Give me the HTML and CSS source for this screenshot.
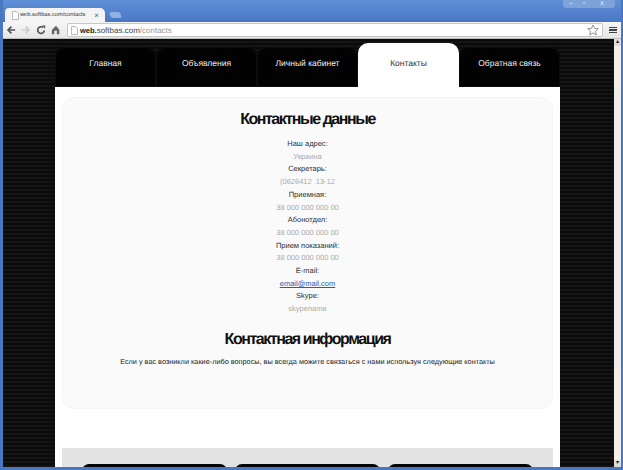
FILE: index.html
```html
<!DOCTYPE html>
<html lang="ru">
<head>
<meta charset="utf-8">
<title>Контакты</title>
<link rel="stylesheet" href="styles.css">
</head>
<body>
<div class="window">
  <div class="tabstrip">
    <div class="tab">
      <svg class="doc" width="7" height="9" viewBox="0 0 8 10"><path d="M.5.5h4.500l2.500 2.500v6.500h-7z" fill="#fff" stroke="#aaa"/></svg>
      <span class="tab-title">web.softbas.com/contacts</span>
      <span class="tab-close">×</span>
    </div>
    <div class="newtab"></div>
    <div class="winctl">
      <span class="winbtn">–</span><span class="winbtn">▫</span><span class="winbtn winx">x</span>
    </div>
  </div>
  <div class="toolbar">
    <svg class="tool" width="10" height="10" viewBox="0 0 12 12"><path d="M11 6H3M6.500 2 2.500 6l4 4" fill="none" stroke="#555" stroke-width="2"/></svg>
    <svg class="tool" width="10" height="10" viewBox="0 0 12 12"><path d="M1 6h8M5.500 2l4 4-4 4" fill="none" stroke="#ccc" stroke-width="2"/></svg>
    <svg class="tool" width="10" height="10" viewBox="0 0 12 12"><path d="M10 6.500A4 4 0 1 1 8.500 3" fill="none" stroke="#555" stroke-width="2"/><path d="M7 0.500h4v4z" fill="#555"/></svg>
    <svg class="tool" width="10" height="10" viewBox="0 0 12 12"><path d="M6 1 1 6v5h3V7h3v4h3V6z" fill="#666"/></svg>
    <div class="omnibox">
      <svg class="doc" width="7" height="9" viewBox="0 0 8 10"><path d="M.5.5h4.500l2.500 2.500v6.500h-7z" fill="#fff" stroke="#aaa"/></svg>
      <span class="url"><b class="url-host">web.</b><span class="url-dom">softbas.com</span><span class="url-path">/contacts</span></span>
      <svg class="star" width="12" height="12" viewBox="0 0 13 13"><path d="m6.500 1 1.700 3.700 4 .4-3 2.700.9 4-3.600-2.100-3.600 2.100.9-4-3-2.700 4-.4z" fill="#fff" stroke="#888"/></svg>
    </div>
    <div class="menu"><i></i><i></i><i></i></div>
  </div>
  <div class="viewport">
    <div class="page">
      <nav class="nav">
        <a class="nav-item">Главная</a>
        <a class="nav-item">Объявления</a>
        <a class="nav-item">Личный кабинет</a>
        <a class="nav-item active">Контакты</a>
        <a class="nav-item">Обратная связь</a>
      </nav>
      <main class="content">
        <section class="card">
          <h1 class="title">Контактные данные</h1>
          <dl class="fields">
            <dt>Наш адрес:</dt><dd>Украина</dd>
            <dt>Секретарь:</dt><dd>(0626412&nbsp; 13-12</dd>
            <dt>Приемная:</dt><dd>38 000 000 000 00</dd>
            <dt>Абонотдел:</dt><dd>38 000 000 000 00</dd>
            <dt>Прием показаний:</dt><dd>38 000 000 000 00</dd>
            <dt>E-mail:</dt><dd><a class="mail" href="#">email@mail.com</a></dd>
            <dt>Skype:</dt><dd>skypename</dd>
          </dl>
          <h2 class="title title-second">Контактная информация</h2>
          <p class="note">Если у вас возникли какие-либо вопросы, вы всегда можите связаться с нами используя следующие контакты</p>
        </section>
        <section class="band">
          <div class="band-btn"></div>
          <div class="band-btn"></div>
          <div class="band-btn"></div>
        </section>
      </main>
    </div>
    <div class="scrollbar">
      <div class="arrow">▴</div>
      <div class="track"><div class="thumb"></div></div>
      <div class="arrow">▾</div>
    </div>
  </div>
</div>
</body>
</html>
```
FILE: styles.css
```css
* { box-sizing: border-box; }
html, body { margin: 0; height: 100%; overflow: hidden; }
body { font-family: "Liberation Sans", Arial, sans-serif; text-rendering: geometricPrecision; }

.window {
  width: 623px;
  height: 470px;
  display: flex;
  flex-direction: column;
  background: #4a78c0;
  padding: 0 2px 3px 3px;
  overflow: hidden;
  will-change: opacity;
}

.tabstrip {
  height: 22px;
  flex: none;
  display: flex;
  align-items: flex-end;
  padding-left: 2px;
  background: linear-gradient(#5f8fd6 0, #4a77c4 100%);
}
.tab {
  width: 100px;
  height: 14px;
  background: #f4f4f4;
  border-radius: 4px 5px 0 0;
  display: flex;
  align-items: center;
  gap: 1px;
  padding: 0 6px 0 7px;
}
.tab .doc { flex: none; }
.tab-title { font-size: 5.700px; color: #333; white-space: nowrap; flex: 1; }
.tab-close { font-size: 8px; color: #555; }
.newtab {
  width: 11px;
  height: 6px;
  margin: 0 0 4px 5px;
  background: #8fb2e6;
  border-radius: 2px;
  transform: skewX(20deg);
}
.winctl {
  margin: 0 6px auto auto;
  height: 8px;
  display: flex;
  gap: 1px;
  background: #7fa3d8;
  border-radius: 0 0 3px 3px;
  padding: 0 2px;
}
.winbtn {
  width: 12px;
  font-size: 7px;
  line-height: 8px;
  text-align: center;
  color: #e8eef8;
}
.winx { width: 22px; }

.toolbar {
  height: 17px;
  flex: none;
  display: flex;
  align-items: center;
  gap: 4px;
  padding: 0 3px;
  background: linear-gradient(#f6f6f6, #e6e6e6);
  border-bottom: 1px solid #bdbdbd;
}
.tool { flex: none; margin-right: 1px; }
.omnibox {
  flex: 1;
  height: 14px;
  display: flex;
  align-items: center;
  gap: 2px;
  padding: 0 3px;
  margin-left: 1px;
  background: #fff;
  border: 1px solid #c6c6c6;
  border-radius: 2px;
}
.url { flex: 1; font-size: 8px; white-space: nowrap; }
.url-host { color: #222; font-size: 7.500px; }
.url-dom { color: #444; }
.url-path { color: #999; }
.star { flex: none; }
.menu { width: 8px; display: flex; flex-direction: column; gap: 1px; margin: 0 1px 0 2px; }
.menu i { display: block; height: 1.500px; background: #444; }

.viewport { flex: 1; min-height: 0; display: flex; }
.page {
  flex: 1;
  min-width: 0;
  padding: 8px 0 0 52px;
  overflow: hidden;
  background: repeating-linear-gradient(#0a0a0a 0, #0a0a0a 2px, #1b1b1b 3px, #101010 4px);
}
.nav { width: 505px; height: 40px; display: flex; position: relative; }
.nav-item {
  flex: 1;
  height: 40px;
  display: flex;
  align-items: center;
  justify-content: center;
  padding-bottom: 8px;
  background: #020202;
  color: #eee;
  font-size: 8.500px;
  border-radius: 10px 10px 0 0;
  box-shadow: inset 0 0 0 1px #0c0c0c;
}
.nav-item.active {
  height: 44px;
  margin-top: -4px;
  padding: 0 0 4px;
  background: #fff;
  color: #333;
  box-shadow: none;
}

.content { width: 505px; height: 400px; background: #fff; padding: 10px 7px 0; }
.card {
  height: 312px;
  background: #fafafa;
  border: 1px solid #f5f5f5;
  border-radius: 12px;
  padding: 11px 0 0;
  text-align: center;
}
.title {
  margin: 0;
  font-size: 16px;
  line-height: 21px;
  font-weight: bold;
  color: #111;
  letter-spacing: -1.450px;
}
.title-second { margin-top: 13px; }
.fields {
  margin: 8px 0 0;
  font-size: 7.500px;
  line-height: 12.700px;
}
.fields dt { color: #333; }
.fields dd { margin: 0; color: #aaa; }
.mail { color: #2a5db0; }
.note { margin: 6px 0 0; font-size: 7.300px; line-height: 12px; color: #222; }

.band {
  height: 60px;
  margin-top: 39px;
  padding: 16px 20px 0;
  background: #e3e3e3;
  display: flex;
  justify-content: space-between;
}
.band-btn { width: 145px; height: 30px; background: #050505; border-radius: 7px 7px 0 0; }

.scrollbar {
  width: 7px;
  flex: none;
  background: #f1efe8;
  display: flex;
  flex-direction: column;
}
.arrow { height: 7px; font-size: 6px; line-height: 7px; text-align: center; background: #ddd; color: #222; }
.track { flex: 1; padding-top: 44px; }
.thumb { height: 280px; background: #ececec; }
```
